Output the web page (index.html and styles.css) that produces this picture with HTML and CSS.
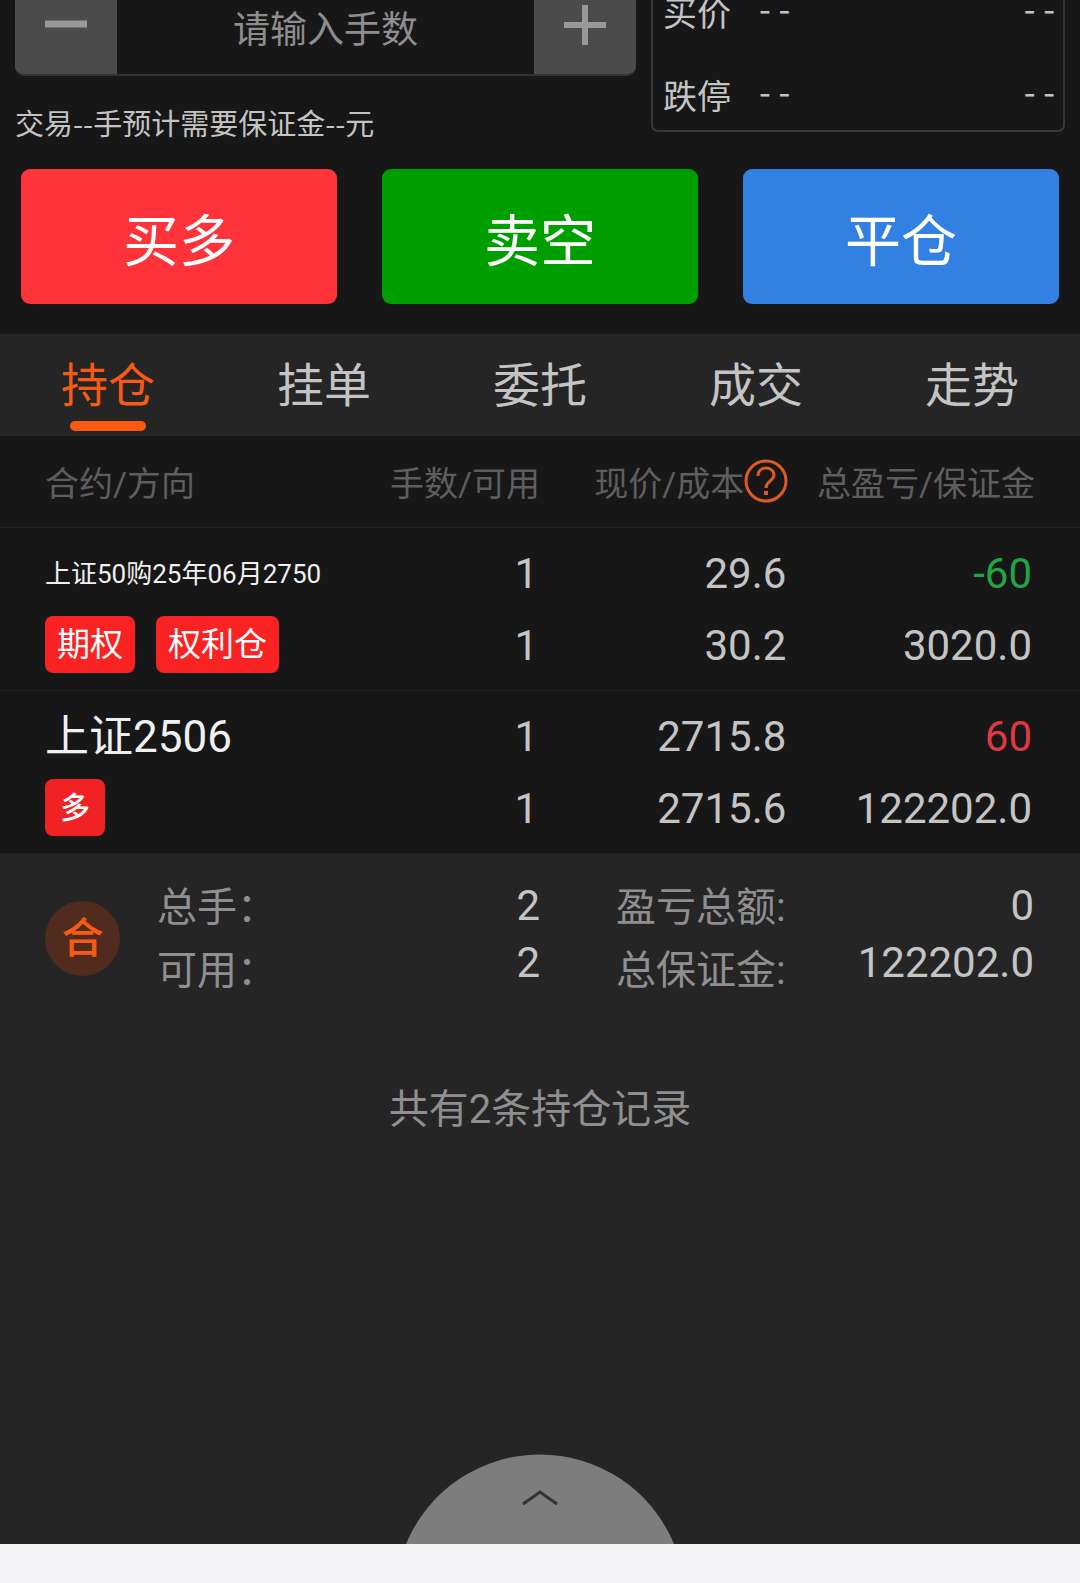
FILE: index.html
```html
<!DOCTYPE html>
<html lang="zh-CN">
<head>
<meta charset="utf-8">
<meta name="viewport" content="width=device-width, initial-scale=1">
<title>持仓</title>
<link rel="stylesheet" href="styles.css">
</head>
<body>
<main class="app">
  <section class="order">
    <div class="order-top">
      <div class="order-entry">
        <div class="stepper">
          <button type="button" class="step" aria-label="减少">
            <svg width="42" height="42" viewBox="0 0 42 42"><path d="M0 21H42" stroke="currentColor" stroke-width="7"/></svg>
          </button>
          <input class="lots" type="text" placeholder="请输入手数" aria-label="手数">
          <button type="button" class="step" aria-label="增加">
            <svg width="42" height="42" viewBox="0 0 42 42"><path d="M0 22H42M21 2V42" stroke="currentColor" stroke-width="6"/></svg>
          </button>
        </div>
        <p class="margin-note">交易--手预计需要保证金--元</p>
      </div>
      <div class="quote">
        <div class="quote-row"><span class="quote-name">买价</span><span class="dash">- -</span><span class="dash">- -</span></div>
        <div class="quote-row"><span class="quote-name">跌停</span><span class="dash">- -</span><span class="dash">- -</span></div>
      </div>
    </div>
    <div class="actions">
      <button type="button" class="action buy">买多</button>
      <button type="button" class="action sell">卖空</button>
      <button type="button" class="action close">平仓</button>
    </div>
  </section>

  <nav class="tabs">
    <a class="tab active" href="#positions">持仓</a>
    <a class="tab" href="#pending">挂单</a>
    <a class="tab" href="#orders">委托</a>
    <a class="tab" href="#deals">成交</a>
    <a class="tab" href="#trend">走势</a>
  </nav>

  <table class="positions" id="positions">
    <thead>
      <tr>
        <th class="col-name">合约/方向</th>
        <th class="col-lots">手数/可用</th>
        <th class="col-price"><span class="head-help">现价/成本<button type="button" class="help" aria-label="说明"><svg width="44" height="44" viewBox="0 0 44 44" fill="none" stroke="currentColor"><circle cx="22" cy="22" r="20" stroke-width="3"/><path d="M14 17C14 6 30 7 30 16C30 22 22 22 22 29" stroke-width="3"/><path d="M22 32V36" stroke-width="4"/></svg></button></span></th>
        <th class="col-profit">总盈亏/保证金</th>
      </tr>
    </thead>
    <tbody>
      <tr>
        <td><div class="line name small">上证50购25年06月2750</div><div class="line tags"><span class="tag">期权</span><span class="tag">权利仓</span></div></td>
        <td><div class="line">1</div><div class="line">1</div></td>
        <td><div class="line">29.6</div><div class="line">30.2</div></td>
        <td><div class="line loss">-60</div><div class="line">3020.0</div></td>
      </tr>
      <tr>
        <td><div class="line name">上证2506</div><div class="line tags"><span class="tag long">多</span></div></td>
        <td><div class="line">1</div><div class="line">1</div></td>
        <td><div class="line">2715.8</div><div class="line">2715.6</div></td>
        <td><div class="line gain">60</div><div class="line">122202.0</div></td>
      </tr>
    </tbody>
  </table>

  <section class="panel">
    <div class="summary">
      <div class="half first">
        <span class="badge">合</span>
        <div class="labels"><div>总手：</div><div>可用：</div></div>
        <div class="values"><div>2</div><div>2</div></div>
      </div>
      <div class="half second">
        <div class="labels"><div>盈亏总额:</div><div>总保证金:</div></div>
        <div class="values"><div>0</div><div>122202.0</div></div>
      </div>
    </div>
    <p class="record-count">共有2条持仓记录</p>
    <button type="button" class="drawer" aria-label="展开">
      <svg width="268" height="90" viewBox="0 0 268 90"><path d="M0 90A145 145 0 0 1 268 90Z" fill="#7d7d7d"/><path d="M117 50L134 38L151 50" fill="none" stroke="#333" stroke-width="3"/></svg>
    </button>
  </section>
  <footer class="bottom-bar"></footer>
</main>
</body>
</html>
```
FILE: styles.css
```css
* { box-sizing: border-box; }

body {
  margin: 0;
  background: #171717;
  color: #c4c4c4;
  font-family: Roboto, "Noto Sans CJK SC", sans-serif;
}

button, input {
  margin: 0;
  padding: 0;
  border: 0;
  background: none;
  color: inherit;
  font: inherit;
}

button { cursor: pointer; }
svg { display: block; }
p { margin: 0; }

.app {
  display: flex;
  flex-direction: column;
  min-height: 100vh;
  overflow: hidden;
}

/* order form, scrolled partly under the top edge */
.order {
  margin-top: -28px;
  padding-bottom: 30px;
}

.order-top {
  display: grid;
  grid-template-columns: minmax(0, 3fr) minmax(0, 2fr);
  gap: 15px;
  padding: 0 15px;
}

.stepper {
  display: flex;
  height: 104px;
  border-bottom: 2px solid #333;
  border-radius: 9px;
  overflow: hidden;
  background: #171717;
}

.step {
  display: flex;
  flex: none;
  align-items: center;
  justify-content: center;
  width: 102px;
  height: 104px;
  background: #4b4b4b;
  color: #999;
}

.lots {
  flex: 1;
  min-width: 0;
  padding-top: 15px;
  font-size: 37px;
  text-align: center;
}

.lots::placeholder { color: #8e8e8e; opacity: 1; }

.margin-note {
  padding-top: 26px;
  font-family: "Noto Sans CJK SC", sans-serif;
  font-size: 29px;
  line-height: 40px;
}

.quote {
  display: flex;
  flex-direction: column;
  gap: 33px;
  height: 160px;
  padding: 15px 8px 0 10px;
  border: 2px solid #383838;
  border-top: 0;
  border-radius: 7px;
  font-family: "Noto Sans CJK SC", sans-serif;
  font-size: 34px;
}

.quote-row {
  display: flex;
  line-height: 50px;
}

.quote-name {
  flex: none;
  width: 96px;
}

.dash { line-height: 42px; }
.dash:last-child { margin-left: auto; }

.actions {
  display: grid;
  grid-template-columns: repeat(3, 1fr);
  gap: 45px;
  margin-top: 27px;
  padding: 0 21px;
}

.action {
  height: 135px;
  border-radius: 9px;
  color: #fff;
  font-size: 56px;
}

.buy { background: #ff343a; }
.sell { background: #009f00; }
.close { background: #3281e2; }

.tabs {
  display: flex;
  background: #252525;
}

.tab {
  display: flex;
  flex: 1;
  flex-direction: column;
  align-items: center;
  height: 102px;
  padding-top: 17px;
  color: #c4c4c4;
  font-size: 47px;
  line-height: 70px;
  text-decoration: none;
}

.tab.active { color: #f75a14; }

.tab.active::after {
  content: "";
  width: 76px;
  height: 10px;
  border-radius: 5px;
  background: #fb5812;
}

.positions {
  width: 100%;
  table-layout: fixed;
  border-collapse: collapse;
  font-size: 42px;
  text-align: right;
}

.positions tr { border-bottom: 1px solid #222; }

.positions th {
  height: 91px;
  padding: 0;
  color: #5e5e5e;
  font-size: 34px;
  font-weight: 400;
  text-align: right;
  white-space: nowrap;
}

.positions td {
  padding: 10px 2px 8px 0;
  vertical-align: top;
}

.positions th:first-child,
.positions td:first-child {
  padding-left: 45px;
  text-align: left;
}

.positions th:last-child { padding-right: 45px; }
.positions td:last-child { padding-right: 48px; }

.col-name { width: 34%; }
.col-lots { width: 16%; }
.col-price { width: 23%; }
.col-profit { width: 27%; }

.head-help {
  display: flex;
  align-items: center;
  justify-content: flex-end;
}

.help { color: #dc5b22; }

.line {
  height: 72px;
  line-height: 72px;
  white-space: nowrap;
}

.name { color: #f0f0f0; font-size: 44px; }
.name.small { font-size: 26px; }
.loss { color: #23a345; }
.gain { color: #dd3a40; }

.tags {
  display: flex;
  align-items: center;
  gap: 21px;
  height: 70px;
}

.tag {
  height: 57px;
  padding: 0 12px;
  border-radius: 8px;
  background: #fa2323;
  color: #fff;
  font-size: 33px;
  line-height: 57px;
}

.tag.long {
  padding: 0 15px;
  background: #f02224;
  font-size: 30px;
  font-weight: 500;
}

.panel {
  display: flex;
  flex: 1;
  flex-direction: column;
  align-items: center;
  background: #252525;
}

.summary {
  display: grid;
  grid-template-columns: 1fr 1fr;
  width: 100%;
  padding-top: 22px;
}

.half { display: flex; }
.first { padding-left: 45px; }
.second { padding: 0 46px 0 76px; }

.badge {
  align-self: center;
  width: 75px;
  height: 75px;
  margin-right: 37px;
  border-radius: 50%;
  background: #512c1e;
  color: #f75a14;
  font-size: 42px;
  font-weight: 500;
  line-height: 75px;
  text-align: center;
}

.labels {
  color: #8f8f8f;
  font-size: 40px;
  line-height: 63px;
}

.values {
  margin-left: auto;
  padding-top: 1px;
  font-size: 42px;
  line-height: 57px;
  text-align: right;
}

.record-count {
  margin-top: 78px;
  color: #8f8f8f;
  font-size: 40px;
  line-height: 60px;
}

.drawer { margin-top: auto; }

.bottom-bar {
  height: 39px;
  background: #f5f5f7;
}
```
